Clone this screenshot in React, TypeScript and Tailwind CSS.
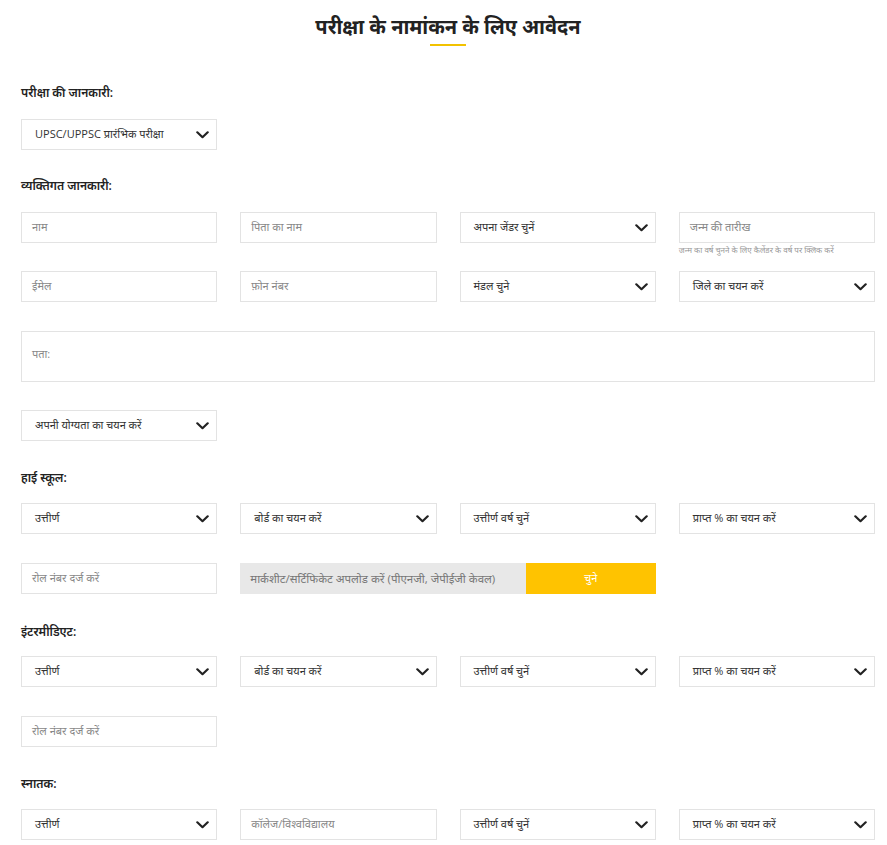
const font = { fontFamily: '"Open Sans", "Noto Sans", "Noto Sans Devanagari", "Lohit Devanagari", sans-serif' };

const Chevron = () => (
  <svg width="13" height="8" viewBox="0 0 13 8" fill="none" className="shrink-0">
    <polyline points="1.3,1.3 6.5,6.2 11.7,1.3" stroke="#222" strokeWidth="2.2" strokeLinecap="round" strokeLinejoin="round" />
  </svg>
);

const Select = ({ label, className = '' }: { label: string; className?: string }) => (
  <div className={`flex h-[31px] items-center justify-between border border-[#e3e3e3] bg-white pl-[13px] pr-[7px] ${className}`}>
    <span className="text-[11px] text-[#333]">{label}</span>
    <Chevron />
  </div>
);

const Input = ({ placeholder, className = '' }: { placeholder: string; className?: string }) => (
  <div className={`flex h-[31px] items-center border border-[#e3e3e3] bg-white px-[10px] ${className}`}>
    <span className="text-[11px] text-[#888]">{placeholder}</span>
  </div>
);

const Label = ({ children, className = '' }: { children: React.ReactNode; className?: string }) => (
  <div className={`text-[12px] font-semibold leading-[18px] text-[#222] ${className}`}>{children}</div>
);

const EduRow = ({ second, secondInput }: { second: string; secondInput?: boolean }) => (
  <div className="grid grid-cols-4 gap-x-[23px]">
    <Select label="उत्तीर्ण" />
    {secondInput ? <Input placeholder={second} /> : <Select label={second} />}
    <Select label="उत्तीर्ण वर्ष चुनें" />
    <Select label="प्राप्त % का चयन करें" />
  </div>
);

export default function App() {
  return (
    <div className="min-h-[845px] w-[887px] bg-white pl-[21px]" style={font}>
      <div className="w-[854px]">
        <div className="flex flex-col items-center pt-[11px]">
          <h1 className="text-[20px] font-bold leading-[32px] text-[#222]">परीक्षा के नामांकन के लिए आवेदन</h1>
          <div className="mt-[1px] h-[2px] w-[36px] bg-[#f2c200]" />
        </div>

        <Label className="mt-[38px]">परीक्षा की जानकारी:</Label>
        <div className="mt-[17px] grid grid-cols-4 gap-x-[23px]">
          <Select label="UPSC/UPPSC प्रारंभिक परीक्षा" />
        </div>

        <Label className="mt-[27px]">व्यक्तिगत जानकारी:</Label>
        <div className="mt-[17px] grid grid-cols-4 gap-x-[23px]">
          <Input placeholder="नाम" />
          <Input placeholder="पिता का नाम" />
          <Select label="अपना जेंडर चुनें" />
          <div className="relative">
            <Input placeholder="जन्म की तारीख" />
            <div className="absolute left-0 top-[32px] whitespace-nowrap text-[8px] text-[#999]">
              जन्म का वर्ष चुनने के लिए कैलेंडर के वर्ष पर क्लिक करें
            </div>
          </div>
        </div>
        <div className="mt-[28px] grid grid-cols-4 gap-x-[23px]">
          <Input placeholder="ईमेल" />
          <Input placeholder="फ़ोन नंबर" />
          <Select label="मंडल चुने" />
          <Select label="जिले का चयन करें" />
        </div>
        <div className="mt-[29px] h-[51px] border border-[#e3e3e3] px-[10px] pt-[8px]">
          <span className="text-[11px] text-[#888]">पता:</span>
        </div>
        <div className="mt-[28px] grid grid-cols-4 gap-x-[23px]">
          <Select label="अपनी योग्यता का चयन करें" />
        </div>

        <Label className="mt-[28px]">हाई स्कूल:</Label>
        <div className="mt-[16px]">
          <EduRow second="बोर्ड का चयन करें" />
        </div>
        <div className="mt-[29px] grid grid-cols-4 gap-x-[23px]">
          <Input placeholder="रोल नंबर दर्ज करें" />
          <div className="col-span-2 flex h-[31px]">
            <div className="flex flex-1 items-center bg-[#e8e8e8] px-[10px]">
              <span className="text-[11.5px] text-[#777]">मार्कशीट/सर्टिफिकेट अपलोड करें (पीएनजी, जेपीईजी केवल)</span>
            </div>
            <div className="flex w-[130px] items-center justify-center bg-[#ffc300] text-[11px] text-white">चुने</div>
          </div>
        </div>

        <Label className="mt-[29px]">इंटरमीडिएट:</Label>
        <div className="mt-[15px]">
          <EduRow second="बोर्ड का चयन करें" />
        </div>
        <div className="mt-[29px] grid grid-cols-4 gap-x-[23px]">
          <Input placeholder="रोल नंबर दर्ज करें" />
        </div>

        <Label className="mt-[28px]">स्नातक:</Label>
        <div className="mt-[16px]">
          <EduRow second="कॉलेज/विश्वविद्यालय" secondInput />
        </div>
      </div>
    </div>
  );
}
